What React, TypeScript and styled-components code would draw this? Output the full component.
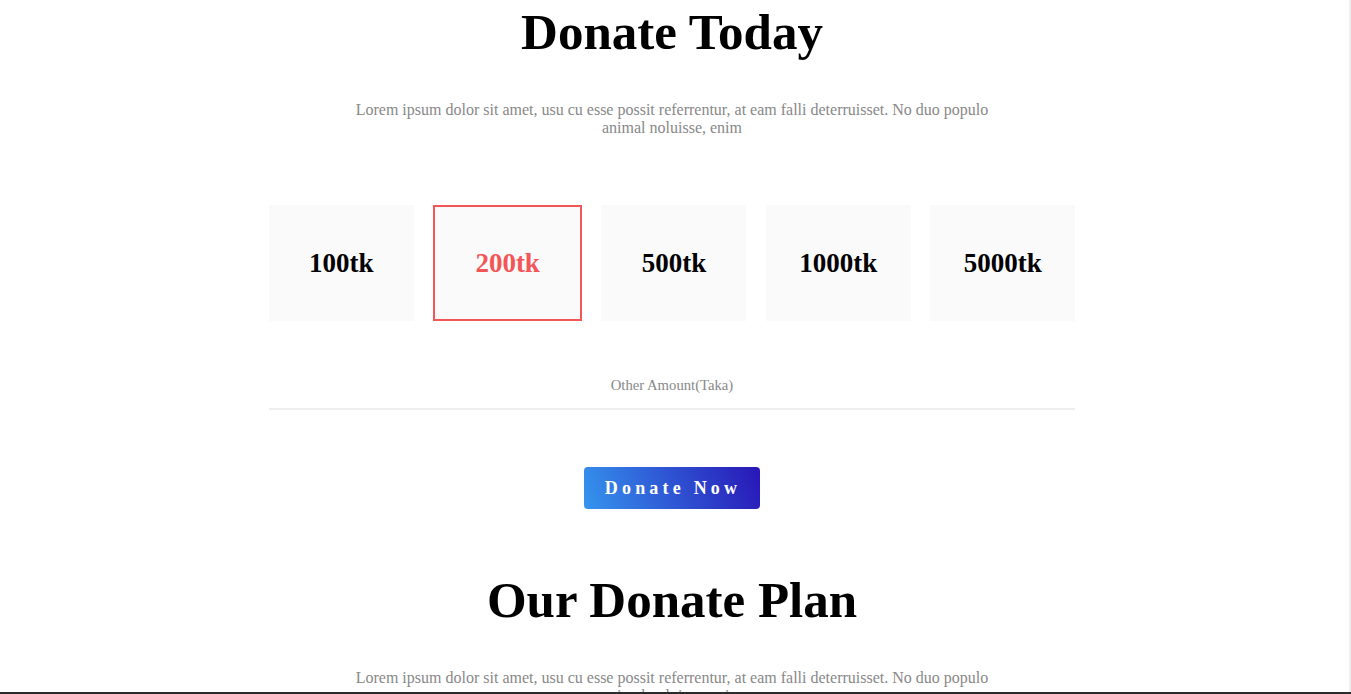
import { createGlobalStyle, styled } from "styled-components";

const GlobalStyle = createGlobalStyle`
    html, body {
        margin: 0;
        padding: 0;
        height: 100%;
        overflow: hidden;
        background: #fff;
    }
    body {
        font-family: "Liberation Serif", "Times New Roman", serif;
    }
`;

const Frame = styled.div`
    display: flex;
    height: 100vh;
`;

const Main = styled.main`
    flex: 1;
    overflow: hidden;
`;

const Track = styled.div`
    width: 5px;
    border-right: 2px solid #efefef;
`;

const BottomEdge = styled.div`
    position: fixed;
    left: 0;
    right: 0;
    bottom: 0;
    height: 2px;
    background: #2b2b2b;
`;

const Section = styled.section<{ top: number }>`
    display: flex;
    flex-direction: column;
    align-items: center;
    padding-top: ${props => props.top}px;
`;

const Title = styled.h1`
    margin: 0;
    font-size: 51px;
    font-weight: 700;
    color: #000;
    text-align: center;
`;

const Lead = styled.p`
    width: 50%;
    margin: 40px 0 0;
    font-size: 16px;
    color: #888;
    text-align: center;
`;

const Amounts = styled.div`
    width: 60%;
    margin-top: 68px;
    display: flex;
    justify-content: space-between;
`;

const Amount = styled.div<{ active?: boolean }>`
    box-sizing: border-box;
    width: ${props => props.active ? 149 : 145}px;
    height: 116px;
    display: flex;
    align-items: center;
    justify-content: center;
    background: #fafafa;
    border: ${props => props.active ? "2px solid #f25656" : "none"};
    font-size: 27px;
    font-weight: 700;
    color: ${props => props.active ? "#f25656" : "#000"};
`;

const OtherAmount = styled.input`
    box-sizing: border-box;
    width: 60%;
    height: 54px;
    margin-top: 35px;
    padding: 12px 0 6px;
    border: none;
    border-bottom: 2px solid #eeeeee;
    outline: none;
    background: transparent;
    font-family: "Liberation Serif", "Times New Roman", serif;
    font-size: 14.7px;
    text-align: center;

    &::placeholder {
        color: #888;
    }
`;

const DonateButton = styled.button`
    margin-top: 57px;
    padding: 11px 19px 10px 21px;
    border: none;
    border-radius: 4px;
    background: linear-gradient(70deg, #3595ee 0%, #2f5bd6 45%, #2816b6 100%);
    color: #fff;
    font-family: "Liberation Serif", "Times New Roman", serif;
    font-size: 18px;
    line-height: 21px;
    font-weight: 700;
    letter-spacing: 4.2px;
    cursor: pointer;
`;

const amounts = ["100tk", "200tk", "500tk", "1000tk", "5000tk"];

const lorem = "Lorem ipsum dolor sit amet, usu cu esse possit referrentur, at eam falli deterruisset. No duo populo animal noluisse, enim";

function App() {
    return (
        <>
            <GlobalStyle />
            <Frame>
                <Main>
                    <Section top={3}>
                        <Title>Donate Today</Title>
                        <Lead>{lorem}</Lead>
                        <Amounts>
                            {amounts.map(a => (
                                <Amount key={a} active={a === "200tk"}>{a}</Amount>
                            ))}
                        </Amounts>
                        <OtherAmount placeholder="Other Amount(Taka)" />
                        <DonateButton>Donate Now</DonateButton>
                    </Section>
                    <Section top={62}>
                        <Title>Our Donate Plan</Title>
                        <Lead>{lorem}</Lead>
                    </Section>
                </Main>
                <Track />
            </Frame>
            <BottomEdge />
        </>
    );
}

export default App;
